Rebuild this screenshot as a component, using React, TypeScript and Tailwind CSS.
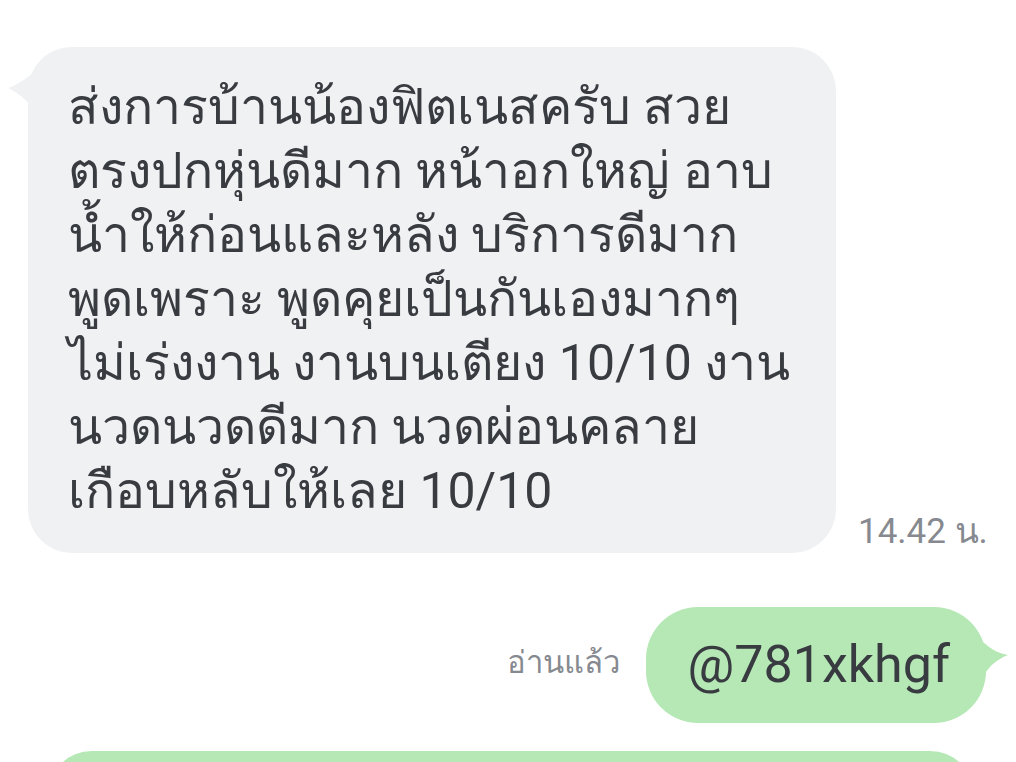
import React from "react";

const lines = [
  "ส่งการบ้านน้องฟิตเนสครับ สวย",
  "ตรงปกหุ่นดีมาก หน้าอกใหญ่ อาบ",
  "น้ำให้ก่อนและหลัง บริการดีมาก",
  "พูดเพราะ พูดคุยเป็นกันเองมากๆ",
  "ไม่เร่งงาน งานบนเตียง 10/10 งาน",
  "นวดนวดดีมาก นวดผ่อนคลาย",
  "เกือบหลับให้เลย 10/10",
];

const App = () => {
  return (
    <div
      className="w-[1016px] h-[762px] overflow-hidden bg-white relative"
      style={{ fontFamily: "Roboto, 'Noto Sans', 'DejaVu Sans', sans-serif" }}
    >
      {/* incoming message */}
      <div className="flex items-end pt-[47px] pl-[28px]">
        <div className="relative">
          <svg
            className="absolute left-[-20px] top-[20px]"
            width="30"
            height="50"
            viewBox="0 0 30 50"
          >
            <path d="M0 21 C10 18 20 10 30 2 L30 48 C22 36 14 28 0 21 Z" fill="#f0f1f3" />
          </svg>
          <div className="relative w-[808px] rounded-[44px] bg-[#f0f1f3] pl-[40px] pr-[20px] pt-[28px] pb-[30px] text-[50px] leading-[64px] text-[#383b40]">
            {lines.map((l, i) => (
              <div key={i} className="whitespace-nowrap">
                {l}
              </div>
            ))}
          </div>
        </div>
        <div className="ml-[22px] mb-[1px] text-[35px] leading-[40px] text-[#868a90] whitespace-nowrap">
          14.42 น.
        </div>
      </div>

      {/* outgoing message */}
      <div className="flex items-center justify-end pr-[30px] mt-[54px]">
        <div className="mr-[26px] mb-[4px] text-[31px] text-[#868a90] whitespace-nowrap">อ่านแล้ว</div>
        <div className="relative">
          <div className="h-[116px] rounded-[52px] bg-[#b6e8b6] pl-[42px] pr-[36px] flex items-center text-[52px] text-[#383b40]">
            @781xkhgf
          </div>
          <svg
            className="absolute right-[-24px] top-[30px]"
            width="30"
            height="40"
            viewBox="0 0 30 40"
          >
            <path d="M0 2 C8 10 16 16 28 18 C18 22 10 28 4 38 Z" fill="#b6e8b6" />
          </svg>
        </div>
      </div>

      {/* next message, cut off */}
      <div className="ml-[48px] mr-[42px] mt-[28px] h-[80px] rounded-t-[44px] bg-[#b6e8b6]" />
    </div>
  );
};

export default App;
